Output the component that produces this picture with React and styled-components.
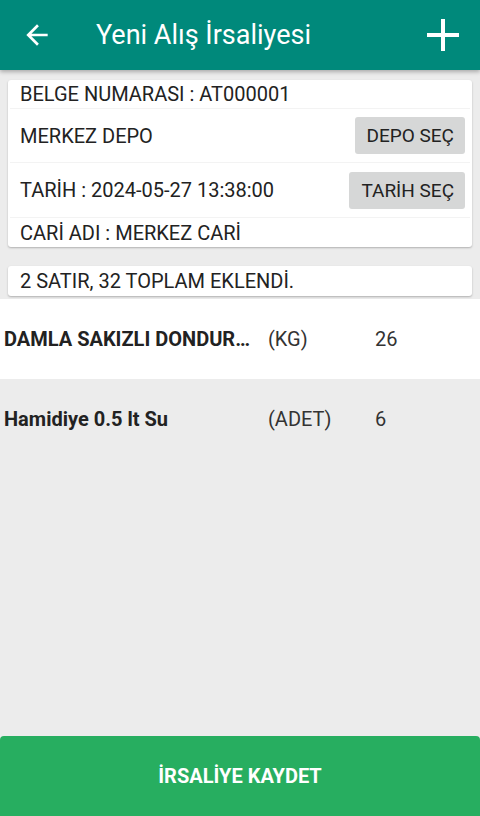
import React from 'react'
import styled, { createGlobalStyle } from "styled-components";

const GlobalStyle = createGlobalStyle`
  * { box-sizing: border-box; }
  body {
    margin: 0;
    background: #ececec;
    font-family: Roboto, "Noto Sans", "Liberation Sans", sans-serif;
    color: #222;
  }
`;

const items = [
  { name: "DAMLA SAKIZLI DONDUR…", unit: "(KG)", qty: 26 },
  { name: "Hamidiye 0.5 lt Su", unit: "(ADET)", qty: 6 },
];

const App = () => {
  return (
    <Screen>
      <GlobalStyle />
      <Header>
        <IconButton $left>
          <svg width="32" height="32" viewBox="0 0 24 24" fill="#fff">
            <path d="M20 11H7.83l5.59-5.59L12 4l-8 8 8 8 1.41-1.41L7.83 13H20v-2z" />
          </svg>
        </IconButton>
        <Title>Yeni Alış İrsaliyesi</Title>
        <IconButton>
          <svg width="32" height="32" viewBox="0 0 32 32" stroke="#fff" strokeWidth="4">
            <line x1="16" y1="0" x2="16" y2="32" />
            <line x1="0" y1="16" x2="32" y2="16" />
          </svg>
        </IconButton>
      </Header>

      <Content>
        <Card>
          <InfoRow $h={28}>BELGE NUMARASI : AT000001</InfoRow>
          <Divider />
          <InfoRow $h={53}>
            <span>MERKEZ DEPO</span>
            <SelectButton>DEPO SEÇ</SelectButton>
          </InfoRow>
          <Divider />
          <InfoRow $h={54}>
            <span>TARİH : 2024-05-27 13:38:00</span>
            <SelectButton>TARİH SEÇ</SelectButton>
          </InfoRow>
          <Divider />
          <InfoRow $h={29}>CARİ ADI : MERKEZ CARİ</InfoRow>
        </Card>
        <Card>
          <InfoRow $h={30}>2 SATIR, 32 TOPLAM EKLENDİ.</InfoRow>
        </Card>
      </Content>

      <List>
        {items.map((item, index) => (
          <ItemRow key={index} $odd={index % 2 === 1}>
            <ItemName>{item.name}</ItemName>
            <ItemText>{item.unit}</ItemText>
            <ItemText>{item.qty}</ItemText>
          </ItemRow>
        ))}
      </List>

      <SaveButton>İRSALİYE KAYDET</SaveButton>
    </Screen>
  );
}

const Screen = styled.div`
  height: 816px;
  display: flex;
  flex-direction: column;
  overflow: hidden;
`;

const Header = styled.div`
  height: 70px;
  flex-shrink: 0;
  background: #00897b;
  display: flex;
  align-items: center;
  padding: 0 21px;
  box-shadow: 0 2px 4px rgba(0, 0, 0, 0.28);
  position: relative;
  z-index: 1;
`;

const IconButton = styled.div`
  width: 32px;
  height: 32px;
  display: flex;
  svg { display: block; }
  ${(p) => p.$left ? "" : "margin-left: auto;"}
`;

const Title = styled.div`
  margin-left: 43px;
  color: #fff;
  font-size: 27px;
  line-height: 30px;
`;

const Content = styled.div`
  padding: 10px 8px 0;
  display: flex;
  flex-direction: column;
  gap: 19px;
`;

const Card = styled.div`
  background: #fff;
  border-radius: 3px;
  box-shadow: 0 1px 2px rgba(0, 0, 0, 0.25);
`;

const InfoRow = styled.div`
  height: ${(p) => p.$h}px;
  display: flex;
  align-items: center;
  justify-content: space-between;
  padding: 0 7px 0 12px;
  font-size: 20px;
  color: #222;
  white-space: nowrap;
`;

const Divider = styled.div`
  height: 1px;
  margin: 0 2px;
  background: #f3f3f3;
`;

const SelectButton = styled.button`
  height: 37px;
  padding: 0 11px 0 12px;
  border: none;
  border-radius: 3px;
  background: #d6d7d7;
  font-family: inherit;
  font-size: 19px;
  color: #222;
`;

const List = styled.div`
  margin-top: 3px;
  flex: 1;
`;

const ItemRow = styled.div`
  height: 80px;
  display: grid;
  grid-template-columns: 264px 107px 1fr;
  align-items: center;
  padding-left: 4px;
  background: ${(p) => (p.$odd ? "transparent" : "#fff")};
`;

const ItemName = styled.div`
  font-weight: 700;
  font-size: 20px;
  color: #222;
  white-space: nowrap;
  overflow: hidden;
`;

const ItemText = styled.div`
  font-size: 20px;
  color: #333;
`;

const SaveButton = styled.button`
  height: 80px;
  flex-shrink: 0;
  border: none;
  border-radius: 4px 4px 0 0;
  background: #27ae60;
  color: #fff;
  font-family: inherit;
  font-weight: 700;
  font-size: 20px;
`;

export default App
